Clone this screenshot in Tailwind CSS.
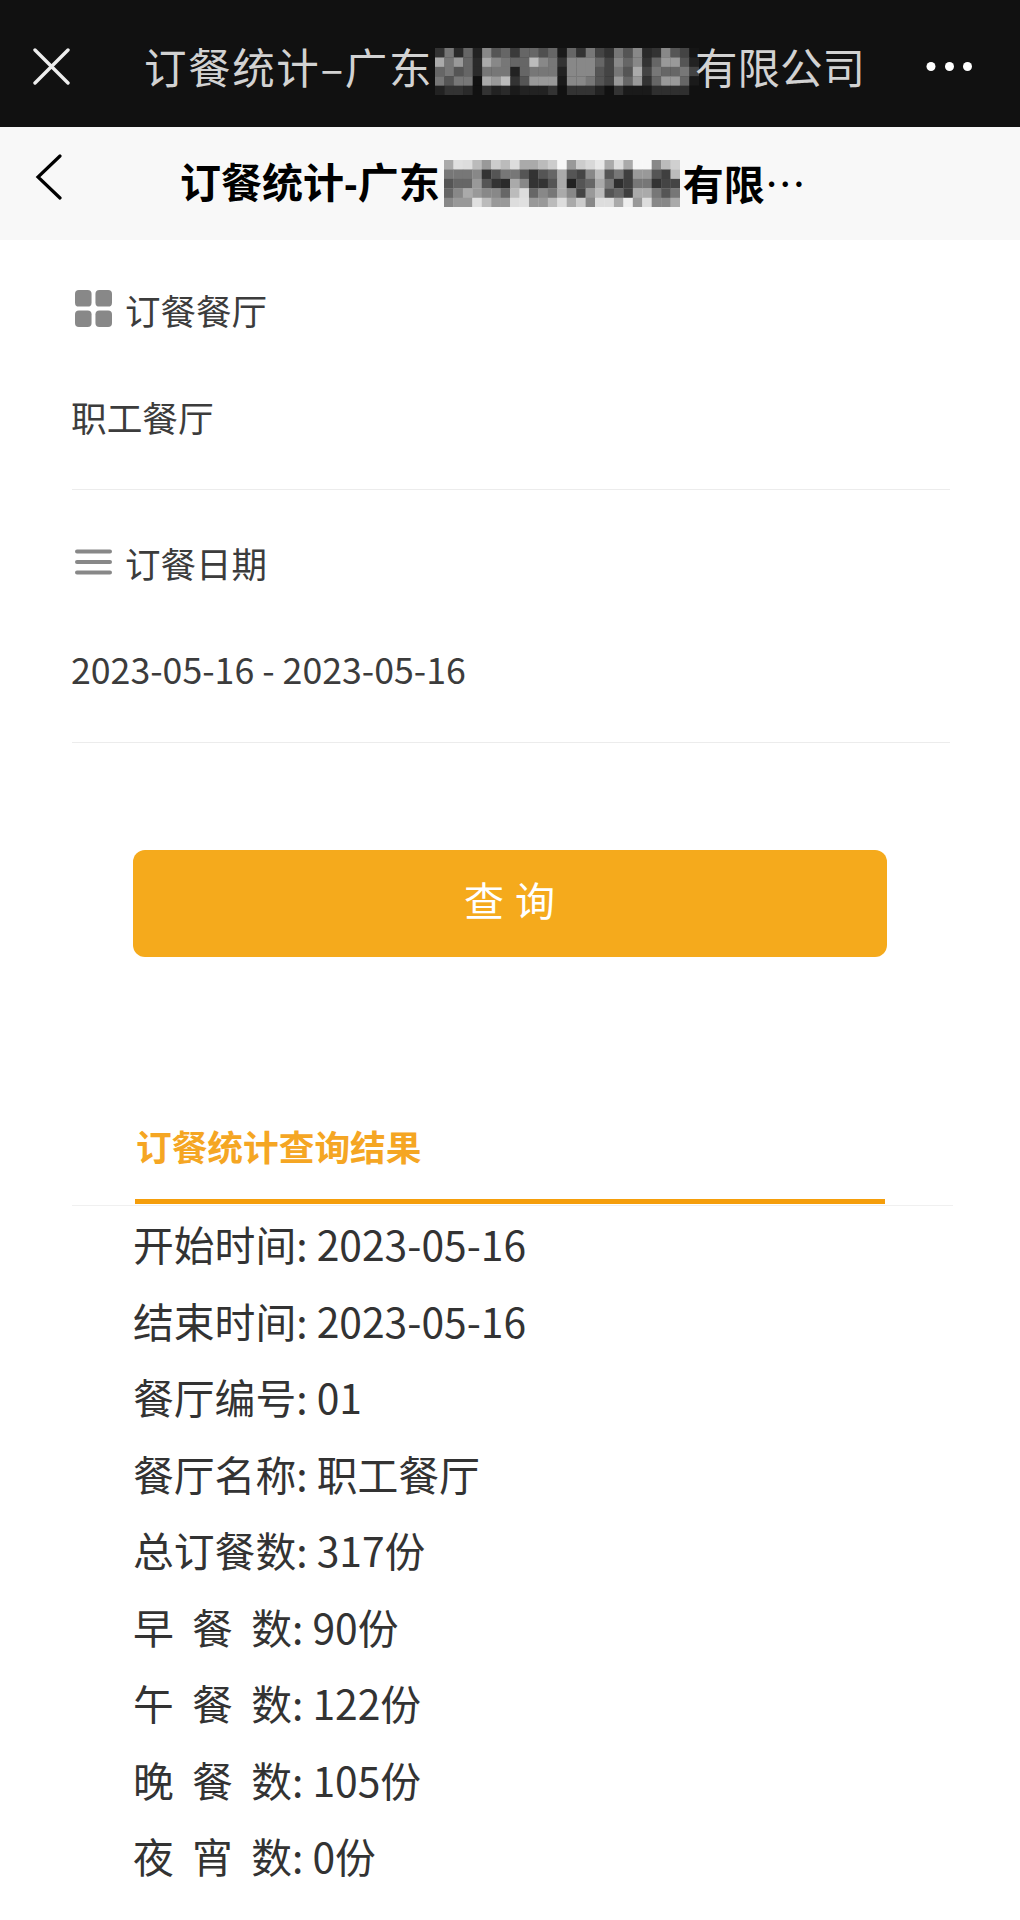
<!DOCTYPE html>
<html lang="zh">
<head>
<meta charset="utf-8">
<script src="https://cdn.jsdelivr.net/npm/@tailwindcss/browser@4"></script>
</head>
<body class="bg-white">
<div class="w-[1020px] h-[1920px] overflow-hidden bg-white text-[#333] font-['Noto_Sans_CJK_SC',sans-serif]">
  <header class="h-[127px] bg-[#111] flex items-center relative">
    <svg class="ml-[32px] w-[38px] h-[38px] shrink-0 mt-[5px]" viewBox="0 0 38 38" fill="none" stroke="#eeeeee" stroke-width="3.4" stroke-linecap="round"><path d="M3 3 L36 36 M36 3 L3 36"/></svg>
    <div class="ml-[74px] flex items-center text-[42.5px] leading-[48px] text-[#d2d2d2] whitespace-nowrap mt-[4px]">
      <span class="tracking-[1.6px]">订餐统计–广东</span>
      <svg id="m1" class="w-[264px] h-[47px] shrink-0 mt-[11px] ml-[2px] -mr-[4px]" viewBox="0 0 264 47"></svg>
      <span class="relative">有限公司</span>
    </div>
    <svg class="absolute left-[926px] top-[61px] w-[47px] h-[11px]" viewBox="0 0 47 11" fill="#fff"><circle cx="5" cy="5.5" r="4.5"/><circle cx="23.5" cy="5.5" r="4.5"/><circle cx="41.5" cy="5.5" r="4.5"/></svg>
  </header>

  <nav class="h-[113px] bg-[#f8f8f8] flex items-center relative">
    <svg class="absolute left-[35px] top-[27px] w-[28px] h-[46px]" viewBox="0 0 28 46" fill="none" stroke="#000" stroke-width="3.2" stroke-linecap="round" stroke-linejoin="miter"><path d="M25 2 L3 23 L25 44"/></svg>
    <div class="ml-[180px] flex items-center text-[41px] leading-[48px] font-bold text-black whitespace-nowrap font-['Liberation_Sans','Noto_Sans_CJK_SC',sans-serif]">
      <span class="mt-[1px]">订餐统计-广东</span>
      <svg id="m2" class="w-[236px] h-[47px] shrink-0 ml-[4px] mr-[3px]" viewBox="0 0 236 47"></svg>
      <span class="mt-[1px]">有限<span class="font-normal font-['Noto_Sans_CJK_SC',sans-serif]">…</span></span>
    </div>
  </nav>

  <section class="pl-[72px] w-[950px] box-border text-[#3c3c3c]">
    <div class="pt-[46px] flex items-center h-[94px] text-[35.5px] leading-[48px]">
      <svg class="ml-[3px] w-[37px] h-[37px] shrink-0 mr-[13px] -mt-[3px]" viewBox="0 0 38 38" fill="#888888"><rect x="0" y="0" width="17" height="17" rx="4"/><rect x="21" y="0" width="17" height="17" rx="4"/><rect x="0" y="21" width="17" height="17" rx="4"/><rect x="21" y="21" width="17" height="17" rx="4"/></svg>
      <span>订餐餐厅</span>
    </div>
    <div class="mt-[59px] -ml-px h-[48px] text-[35.7px] leading-[48px]">职工餐厅</div>
    <div class="mt-[48px] h-px bg-[#ececec]"></div>

    <div class="mt-[49px] flex items-center h-[48px] text-[35.5px] leading-[48px]">
      <svg class="ml-[3px] w-[37px] h-[28px] shrink-0 mr-[13px]" viewBox="0 0 37 28" fill="#888888"><rect x="0" y="0.5" width="37" height="4" rx="2"/><rect x="0" y="11" width="37" height="4" rx="2"/><rect x="0" y="21.5" width="37" height="4" rx="2"/></svg>
      <span>订餐日期</span>
    </div>
    <div class="mt-[58px] -ml-px h-[48px] text-[35.7px] leading-[48px]">2023-05-16 - 2023-05-16</div>
    <div class="mt-[49px] h-px bg-[#ececec]"></div>
  </section>

  <div class="mt-[107px] ml-[133px] w-[754px] h-[107px] rounded-[12px] bg-[#f5aa1c] flex items-center justify-center text-white text-[40px] tracking-[1px] pb-[10px]">查 询</div>

  <section class="relative mt-[170px] ml-[72px] w-[881px] h-[79px] border-b border-[#f0f0f0]">
    <div class="pl-[64px] text-[35.7px] leading-[38px] font-bold text-[#f5a623]">订餐统计查询结果</div>
    <div class="absolute left-[63px] bottom-[1px] w-[750px] h-[5px] bg-[#f59e0b]"></div>
  </section>

  <ul class="ml-[133px] text-[40.8px] leading-[76.5px] text-[#333] whitespace-nowrap">
    <li>开始时间: 2023-05-16</li>
    <li>结束时间: 2023-05-16</li>
    <li>餐厅编号: 01</li>
    <li>餐厅名称: 职工餐厅</li>
    <li>总订餐数: 317份</li>
    <li>早&nbsp;&nbsp;餐&nbsp;&nbsp;数: 90份</li>
    <li>午&nbsp;&nbsp;餐&nbsp;&nbsp;数: 122份</li>
    <li>晚&nbsp;&nbsp;餐&nbsp;&nbsp;数: 105份</li>
    <li>夜&nbsp;&nbsp;宵&nbsp;&nbsp;数: 0份</li>
  </ul>
</div>
<script>
const NS = "http://www.w3.org/2000/svg";
function draw(id, rows, tile) {
  const svg = document.getElementById(id);
  rows.forEach((row, y) => row.split(" ").forEach((c, x) => {
    const r = document.createElementNS(NS, "rect");
    r.setAttribute("x", x * tile);
    r.setAttribute("y", y * tile);
    r.setAttribute("width", tile + 0.3);
    r.setAttribute("height", tile + 0.3);
    r.setAttribute("fill", "#" + c + c + c);
    svg.appendChild(r);
  }));
}
draw("m1", [
 "33 77 2a 66 22 88 55 66 3a 66 66 4f 66 1a 66 33 77 44 33 77 55 88 2a 33 88 55 44 15",
 "aa 77 99 66 2a aa 88 77 66 66 bb 88 77 33 88 88 88 66 44 88 66 88 33 66 99 99 55 22",
 "66 77 55 66 2a 77 77 77 22 66 77 77 77 22 88 88 88 55 44 77 55 aa 44 77 66 66 77 44",
 "77 55 77 77 11 aa 99 bb 33 55 99 99 99 1a 88 88 77 55 44 99 66 99 33 66 99 99 66 1a",
 "22 33 33 2a 11 33 22 2a 1a 22 22 22 33 11 33 33 33 22 11 33 1a 1a 1a 2f 2f 2f 2f 11"
], 9.42);
draw("m2", [
 "aa e0 dd bb 99 cc bb dd aa aa bb cc f7 99 cc d8 e8 aa dd aa f7 f7 88 bb d0",
 "77 77 77 88 33 55 77 77 55 33 55 66 aa 55 44 88 bb 55 77 3f 99 99 55 3f bb",
 "55 66 66 99 55 33 2a aa 88 33 33 55 aa 22 55 66 aa 77 2f 3f 77 77 33 44 44",
 "66 88 aa 99 88 88 66 bb dd 66 88 77 aa 88 44 99 bb 55 66 3f aa aa 77 55 77",
 "88 99 99 e0 bb 99 99 dd e0 99 99 bb dd aa cc 88 dd dd aa ee 99 dd 88 88 aa"
], 9.44);
</script>
</body>
</html>
